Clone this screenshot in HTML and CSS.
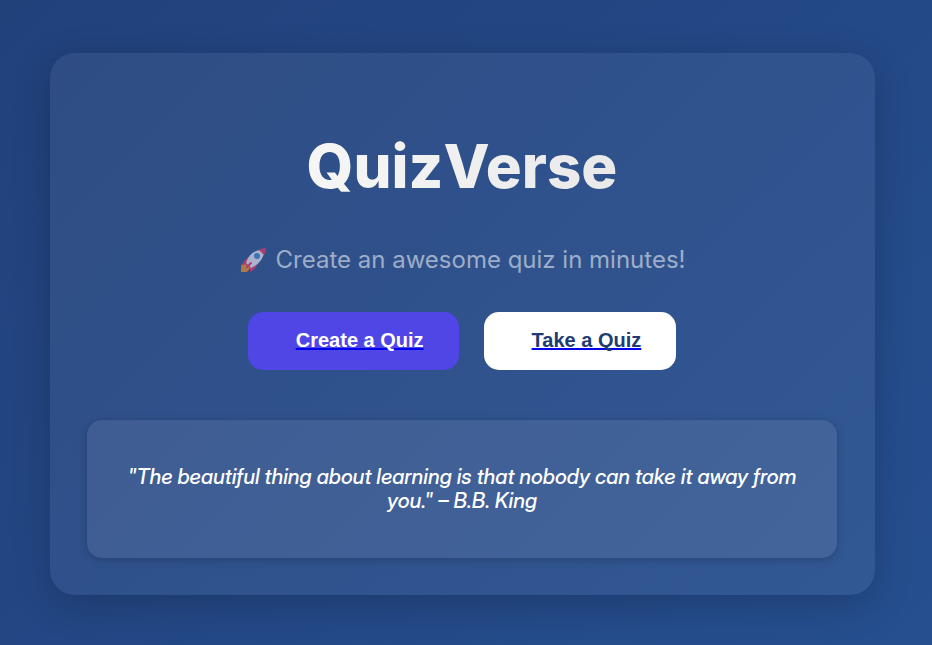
FILE: index.html
```html
<!DOCTYPE html>
<html lang="en">
<head>
<meta charset="utf-8">
<title>QuizVerse</title>
<link rel="stylesheet" href="styles.css">
</head>
<body>
<main class="card">
  <h1 class="title">QuizVerse</h1>
  <p class="tagline">
    <svg class="rocket" viewBox="0 0 28 28" aria-hidden="true">
      <path fill="#e8892c" d="M3 18h4l4 4-3 4H2v-5z"/>
      <path fill="#e0356b" d="M12 11C8 11 5 14 3 19l7-1zM18 17c0 4-3 7-7 9l0-8z"/>
      <path fill="#e3dbe8" d="M21 4C14 5 9 10 7 17l5 5c7-3 12-9 13-15z"/>
      <path fill="#e0356b" d="M27 2c-3 0-6 1-7 2l5 5c1-2 2-4 2-7z"/>
      <circle cx="18" cy="10" r="3" fill="#3c87cf"/>
      <path stroke="#e0356b" stroke-width="2" stroke-linecap="round" d="M8 21l4-4"/>
    </svg>
    Create an awesome quiz in minutes!
  </p>
  <nav class="actions" aria-label="Quiz actions">
    <button class="button primary" type="button">Create a Quiz</button>
    <button class="button secondary" type="button">Take a Quiz</button>
  </nav>
  <blockquote class="quote">"The beautiful thing about learning is that nobody can take it away from you." – B.B. King</blockquote>
</main>
</body>
</html>
```

FILE: styles.css
```css
* { box-sizing: border-box; }

body {
  margin: 0;
  min-height: 100vh;
  padding: 53px 57px 50px 50px;
  background: linear-gradient(135deg, #21417b, #264f90);
  font-family: Inter, sans-serif;
  color: #fff;
}

.card {
  padding: 76px 38px 37px 37px;
  border-radius: 25px;
  background: rgba(255, 255, 255, 0.06);
  box-shadow: 0 10px 38px rgba(0, 0, 0, 0.2);
  text-align: center;
}

.title {
  margin: 0;
  font-size: 60px;
  line-height: 75px;
  font-weight: 800;
  background: linear-gradient(90deg, #fff, #e0e0e0);
  background-clip: text;
  color: transparent;
}

.tagline {
  display: flex;
  justify-content: center;
  align-items: center;
  gap: 9px;
  margin: 40px 0 37px;
  font-size: 24px;
  line-height: 31px;
  color: rgba(255, 255, 255, 0.54);
}

.rocket {
  width: 28px;
  height: 28px;
  opacity: 0.7;
}

.actions {
  display: flex;
  justify-content: center;
  gap: 25px;
  margin-bottom: 50px;
}

.button {
  height: 58px;
  padding: 0 35px 2px 48px;
  border: 0;
  border-radius: 15px;
  font: bold 20px "Liberation Sans", Arial, sans-serif;
  text-decoration: underline 2px #0000ee;
  text-decoration-skip-ink: none;
  text-underline-offset: 1px;
}

.primary { background: #4f46e5; color: #fff; }
.secondary { background: #fff; color: #1e3c72; }

.quote {
  margin: 0;
  padding: 45px 37px;
  border-radius: 15px;
  background: rgba(255, 255, 255, 0.08);
  box-shadow: 0 2px 10px rgba(0, 0, 0, 0.2);
  font-family: "Inter Display", Inter, sans-serif;
  font-size: 21px;
  line-height: 24px;
  font-weight: 500;
  font-style: italic;
}
```
